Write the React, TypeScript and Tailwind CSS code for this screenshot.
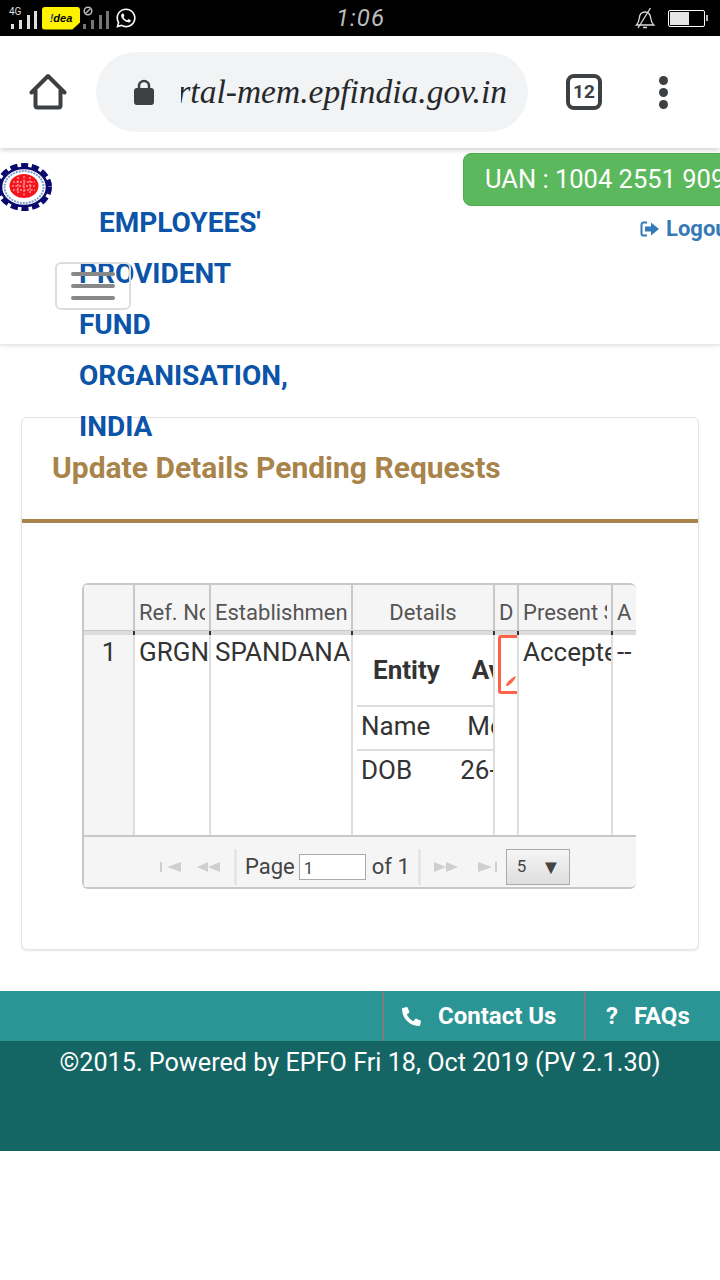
import { FaWhatsapp, FaPhone } from "react-icons/fa";

const COLS = "grid grid-cols-[51px_76px_142px_142px_24px_94px_25px]";

function Bars({ dim }: { dim?: boolean }) {
  const c = dim ? "#777" : "#ddd";
  return (
    <svg width="27" height="20" viewBox="0 0 27 20">
      <rect x="0" y="14" width="3" height="5" fill={c} />
      <rect x="8" y="10" width="3" height="9" fill={c} />
      <rect x="16" y="5" width="3" height="14" fill={c} />
      <rect x="23" y="1" width="3" height="18" fill={c} />
    </svg>
  );
}

function StatusBar() {
  return (
    <div className="h-9 bg-black flex items-center shrink-0 text-[#ddd]">
      <div className="ml-[9px] w-[28px] h-[30px] relative">
        <span className="absolute left-0 top-[3px] text-[10px] leading-[11px] font-['Roboto',sans-serif]">4G</span>
        <div className="absolute left-[2px] top-[7px]">
          <Bars />
        </div>
      </div>
      <div className="ml-[5px] w-[38px] h-[23px] bg-[#fff200] rounded-[3px] [clip-path:polygon(0_0,100%_0,100%_70%,80%_100%,0_100%)] flex items-center justify-center text-black text-[11px] font-bold italic font-['Liberation_Sans',sans-serif]">
        <span className="text-[#0a4fb0]">!</span>dea
      </div>
      <div className="ml-[3px] w-[26px] h-[30px] relative">
        <div className="absolute left-0 top-[7px]">
          <Bars dim />
        </div>
        <svg width="10" height="10" viewBox="0 0 10 10" className="absolute left-0 top-[3px]">
          <circle cx="5" cy="5" r="3.800" fill="none" stroke="#bbb" strokeWidth="1.500" />
          <path d="M2.500 7.500l5-5" stroke="#bbb" strokeWidth="1.500" />
        </svg>
      </div>
      <FaWhatsapp size={22} className="ml-[6px] text-white" />
      <span className="ml-[199px] w-[49px] text-[24px] italic tracking-[1px] text-[#bbb] font-['Roboto',sans-serif]">1:06</span>
      <svg width="20" height="22" viewBox="0 0 20 22" fill="none" stroke="#ddd" strokeWidth="1.300" className="ml-[250px]">
        <path d="M1.500 18c2-2 2.500-4 2.800-7 .4-4 2.700-6 5.700-6s5.200 2 5.700 6c.3 3 1 5 3 7z" />
        <path d="M8 20.500h4M15.500 1 3 21" />
      </svg>
      <div className="ml-[13px] w-[37px] h-[17px] border border-white rounded-[2px] p-[1px]">
        <div className="w-[19px] h-full bg-[#e6e6e6]" />
      </div>
      <div className="ml-[1px] w-[2px] h-[6px] bg-[#bbb]" />
    </div>
  );
}

function Toolbar() {
  return (
    <div className="h-[112px] bg-white flex items-center shrink-0 relative z-10 shadow-[0_2px_5px_rgba(0,0,0,0.18)]">
      <svg width="38" height="38" viewBox="0 0 38 38" fill="none" className="ml-[29px]">
        <path d="M2.500 19.500 19 3l16.500 16.500M6.500 17.500V32.500a2 2 0 0 0 2 2H29.500a2 2 0 0 0 2-2V17.500" stroke="#3c4043" strokeWidth="4" strokeLinecap="round" strokeLinejoin="round" />
      </svg>
      <div className="ml-[29px] w-[432px] h-20 rounded-full bg-[#f1f3f4] flex items-center pl-[38px] pr-[21px]">
        <svg width="20" height="27" viewBox="0 0 20 27" className="shrink-0">
          <path d="M5 11V7a5 5 0 0 1 10 0v4" fill="none" stroke="#3c4043" strokeWidth="2.500" />
          <rect x="0" y="9" width="20" height="17" rx="3" fill="#3c4043" />
        </svg>
        <div className="ml-[27px] flex-1 overflow-hidden flex justify-end">
          <span className="whitespace-nowrap text-[33.5px] leading-10 italic text-[#26282b] font-['Liberation_Serif',serif]">rtal-mem.epfindia.gov.in</span>
        </div>
      </div>
      <div className="ml-[38px] w-9 h-9 rounded-lg border-4 border-[#3c4043] flex items-center justify-center text-[19px] font-bold text-[#3c4043] font-['Roboto',sans-serif]">
        12
      </div>
      <div className="ml-[57px] flex flex-col gap-[3px]">
        <div className="w-[9px] h-[9px] rounded-full bg-[#3c4043]" />
        <div className="w-[9px] h-[9px] rounded-full bg-[#3c4043]" />
        <div className="w-[9px] h-[9px] rounded-full bg-[#3c4043]" />
      </div>
    </div>
  );
}

function Logo() {
  return (
    <svg width="56" height="48" viewBox="0 0 56 48" className="-ml-1 shrink-0">
      <ellipse cx="28" cy="24" rx="25" ry="21" fill="none" stroke="#0a0a6e" strokeWidth="6" strokeDasharray="7 3.500" />
      <ellipse cx="28" cy="24" rx="23" ry="19" fill="#fff" stroke="#0a0a6e" strokeWidth="2.500" />
      <ellipse cx="28" cy="24" rx="19.500" ry="16" fill="none" stroke="#7f9fd0" strokeWidth="2" strokeDasharray="2 1" />
      <ellipse cx="28" cy="23" rx="14.500" ry="12" fill="#f5141e" />
      <path d="M17 19h22M16 23h24M17 27h22M22 14v16M28 13v20M34 14v16" stroke="#fbc9c9" strokeWidth="1" strokeDasharray="2 1.500" />
    </svg>
  );
}

function Header() {
  return (
    <div className="h-[197px] shrink-0 relative flex bg-white border-b border-[#e8e8e8] shadow-[0_2px_3px_rgba(0,0,0,0.08)]">
      <div className="mt-[15px] ml-0">
        <Logo />
      </div>
      <h1 className="ml-[27px] mt-[49px] w-[215px] shrink-0 indent-5 text-[28px] leading-[51px] font-bold text-[#0b54a8] font-['Roboto',sans-serif]">
        EMPLOYEES' PROVIDENT FUND ORGANISATION, INDIA
      </h1>
      <div className="ml-[169px] w-[300px] shrink-0 flex flex-col">
        <div className="mt-[5px] h-[53px] bg-[#5cb85c] border border-[#4cae4c] rounded-l-lg pl-[21px] flex items-center whitespace-nowrap text-[25.5px] text-white font-['Roboto',sans-serif]">
          UAN : 1004 2551 9090
        </div>
        <div className="ml-[177px] mt-[10px] flex items-center gap-[7px] text-[#337ab7] text-[22px] font-bold leading-[26px] font-['Roboto',sans-serif]">
          <svg width="19" height="16" viewBox="0 0 19 16" className="shrink-0">
            <path d="M7 1.500H3.500a2 2 0 0 0-2 2v9a2 2 0 0 0 2 2H7" fill="none" stroke="#337ab7" strokeWidth="2" />
            <path d="M5 5.500h6V1.500l8 6.500-8 6.500v-4H5z" fill="#337ab7" />
          </svg>
          Logout
        </div>
      </div>
      <div className="absolute left-[55px] top-[114px] w-[76px] h-[48px] border-2 border-[#ddd] rounded-md flex flex-col items-center justify-center gap-2">
        <div className="w-[44px] h-[4px] rounded-sm bg-[#888]" />
        <div className="w-[44px] h-[4px] rounded-sm bg-[#888]" />
        <div className="w-[44px] h-[4px] rounded-sm bg-[#888]" />
      </div>
    </div>
  );
}

function PagerIcon({ d }: { d: string }) {
  return (
    <svg width="24" height="12" viewBox="0 0 24 12">
      <path d={d} fill="#cfcfcf" />
    </svg>
  );
}

function HeadCell({ label, center }: { label: string; center?: boolean }) {
  return (
    <div className="h-[45px] border-l-2 border-[#c8c8c8] px-[4px] pt-[14px]">
      <div className={`overflow-hidden whitespace-nowrap text-[22px] leading-[28px] text-[#555] ${center ? "text-center" : ""}`}>{label}</div>
    </div>
  );
}

function BodyCell({ label, right }: { label: string; right?: string }) {
  return (
    <div className={`border-l-2 border-[#ddd] pl-[4px] pt-[1px] ${right ?? "pr-0"}`}>
      <div className="overflow-hidden whitespace-nowrap">{label}</div>
    </div>
  );
}

function DataTable() {
  return (
    <div className="ml-[60px] mt-[60px] w-[554px] h-[306px] border-t-2 border-b-2 border-[#c8c8c8] rounded-md overflow-hidden flex flex-col font-['Roboto',sans-serif]">
      <div className={`${COLS} bg-[#f5f5f5] border-b border-[#c8c8c8]`}>
        <div className="h-[45px] border-l-2 border-[#c8c8c8]" />
        <HeadCell label="Ref. No" />
        <HeadCell label="Establishment" />
        <HeadCell label="Details" center />
        <HeadCell label="Download" />
        <HeadCell label="Present Status" />
        <HeadCell label="Approved" />
      </div>
      <div className={`${COLS} h-[4px] bg-[#dddddd]`}>
        <div className="border-l-2 border-[#c8c8c8]" />
        <div className="border-l-2 border-[#333]" />
        <div className="border-l-2 border-[#333]" />
        <div className="border-l-2 border-[#333]" />
        <div className="border-l-2 border-[#333]" />
        <div className="border-l-2 border-[#333]" />
        <div className="border-l-2 border-[#333]" />
      </div>
      <div className={`${COLS} h-[200px] text-[26px] leading-[32px] text-[#333]`}>
        <div className="border-l-2 border-[#c8c8c8] bg-[#f5f5f5] text-center pl-[1px] pt-[1px]">1</div>
        <BodyCell label="GRGN" />
        <BodyCell label="SPANDANA" />
        <div className="border-l-2 border-[#ddd] pl-[4px] overflow-hidden">
          <div className="w-[190px]">
            <div className="h-[72px] flex items-center border-b-2 border-[#ddd] font-bold">
              <span className="ml-4">Entity</span>
              <span className="ml-[32px] whitespace-nowrap">Available</span>
            </div>
            <div className="h-[44px] flex items-center border-b-2 border-[#ddd] pb-[5px]">
              <span className="ml-1">Name</span>
              <span className="ml-[37px] whitespace-nowrap">Member</span>
            </div>
            <div className="h-[42px] flex items-center pb-[4px]">
              <span className="ml-1">DOB</span>
              <span className="ml-[48px] whitespace-nowrap">26-01-1990</span>
            </div>
          </div>
        </div>
        <div className="border-l-2 border-[#ddd] pl-[3px] pr-px overflow-hidden">
          <div className="w-[40px] h-[59px] border-[3px] border-[#ff6347] rounded-[3px] flex items-end pl-[3px] pb-[3px]">
            <svg width="14" height="14" viewBox="0 0 14 14">
              <path d="M2 12c0-3 5-8 10-10-1 4-6 10-10 10z" fill="#ff6347" />
            </svg>
          </div>
        </div>
        <BodyCell label="Accepted" />
        <BodyCell label="--" right="pr-[2px]" />
      </div>
      <div className="h-[2px] shrink-0 bg-[#c8c8c8]" />
      <div className="flex-1 bg-[#f5f5f5] border-l-2 border-[#c8c8c8] flex items-center pt-[9px] pl-[75px] text-[#444] text-[22px]">
        <PagerIcon d="M1 1h2v10H1zM22 1v10L8 6z" />
        <div className="ml-[13px]">
          <PagerIcon d="M12 1v10L1 6zM24 1v10L12 6z" />
        </div>
        <div className="ml-[14px] w-[3px] h-[36px] bg-[#e6e6e6]" />
        <span className="ml-[8px]">Page</span>
        <div className="ml-[4px] w-[67px] h-[26px] bg-white border border-[#aaa] text-[17px] leading-[26px] pl-[4px]">1</div>
        <span className="ml-[6px]">of 1</span>
        <div className="ml-[8px] w-[3px] h-[36px] bg-[#e6e6e6]" />
        <div className="ml-[13px]">
          <PagerIcon d="M0 1v10L12 6zM12 1v10L24 6z" />
        </div>
        <div className="ml-[18px]">
          <PagerIcon d="M2 1v10L16 6zM19 1h2v10h-2z" />
        </div>
        <div className="ml-[6px] w-[64px] h-[36px] border border-[#aaa] bg-gradient-to-b from-[#f5f5f5] to-[#dedede] flex items-center justify-between pl-[10px] pr-[8px] text-[17px]">
          <span>5</span>
          <span className="text-[20px]">▼</span>
        </div>
      </div>
    </div>
  );
}

function Panel() {
  return (
    <div className="ml-[21px] mt-[72px] w-[678px] h-[533px] shrink-0 border border-[#e4e4e4] rounded-md shadow-[0_1px_2px_rgba(0,0,0,0.1)] bg-white">
      <div className="h-[105px] border-b-4 border-[#a8844a] pl-[30px] pt-[30px] text-[30px] leading-[40px] font-bold text-[#a8844a] font-['Roboto',sans-serif]">
        Update Details Pending Requests
      </div>
      <DataTable />
    </div>
  );
}

function Footer() {
  return (
    <div className="mt-[41px] shrink-0 font-['Roboto',sans-serif] text-white">
      <div className="h-[50px] bg-[#2b9494] flex justify-end text-[24px] font-bold">
        <div className="w-[202px] border-l-2 border-[#7c7c7c] flex items-center pl-[18px]">
          <FaPhone size={19} className="-scale-x-100" />
          <span className="ml-[17px]">Contact Us</span>
        </div>
        <div className="w-[136px] border-l-2 border-[#7c7c7c] flex items-center pl-[20px]">
          <span>?</span>
          <span className="ml-[16px]">FAQs</span>
        </div>
      </div>
      <div className="h-[110px] bg-[#156565] text-center text-[25.2px] leading-[44px]">
        ©2015. Powered by EPFO Fri 18, Oct 2019 (PV 2.1.30)
      </div>
    </div>
  );
}

export default function App() {
  return (
    <div className="w-[720px] h-[1280px] bg-white overflow-hidden flex flex-col">
      <StatusBar />
      <Toolbar />
      <Header />
      <Panel />
      <Footer />
    </div>
  );
}
